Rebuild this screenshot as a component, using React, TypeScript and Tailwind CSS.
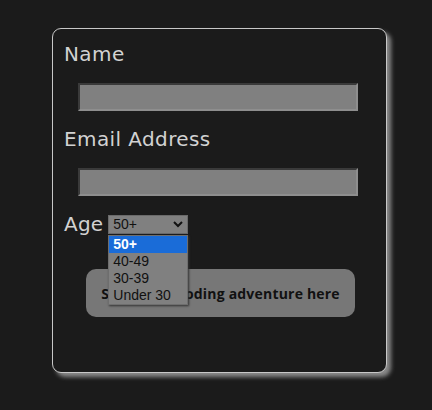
const ages = ["50+", "40-49", "30-39", "Under 30"];

export default function App() {
  return (
    <div className="w-[432px] h-[410px] bg-[#1b1b1b] pt-[28px] pl-[52px] font-['DejaVu_Sans',sans-serif]">
      <form className="w-[335px] h-[345px] border border-[#c8c8c8] rounded-[9px] bg-[#1b1b1b] shadow-[4px_4px_4px_#8a8a8a] px-[11px] pt-[10px] flex flex-col">
        <label className="text-[20px] tracking-[0.4px] leading-[30px] text-[#d2d2d2]">Name</label>
        <input
          type="text"
          className="mt-[14px] ml-[14px] w-[280px] h-[28px] bg-[#808080] border-2 border-t-[#3a3a3a] border-l-[#3a3a3a] border-b-[#8e8e8e] border-r-[#8e8e8e] outline-none"
        />
        <label className="mt-[13px] text-[20px] tracking-[0.4px] leading-[30px] text-[#d2d2d2]">Email Address</label>
        <input
          type="email"
          className="mt-[14px] ml-[14px] w-[280px] h-[28px] bg-[#808080] border-2 border-t-[#3a3a3a] border-l-[#3a3a3a] border-b-[#8e8e8e] border-r-[#8e8e8e] outline-none"
        />
        <div className="mt-[15px] flex items-center gap-[5px] relative">
          <label className="text-[20px] tracking-[0.2px] leading-[26px] text-[#d2d2d2]">Age</label>
          <div className="relative">
            <div className="w-[80px] h-[19px] bg-[#808080] border border-[#6a6a6a] flex items-center justify-between px-[4px] font-['Liberation_Sans',sans-serif] text-[14px] text-[#111]">
              <span>50+</span>
              <svg width="10" height="7" viewBox="0 0 10 7">
                <path d="M1 1 L5 5 L9 1" fill="none" stroke="#111" strokeWidth="2" />
              </svg>
            </div>
            <ul className="absolute z-10 left-0 top-[20px] w-[80px] bg-[#808080] border border-[#6e6e6e] shadow-[1px_1px_2px_#333] font-['Liberation_Sans',sans-serif] text-[14px] leading-[17px] text-[#111]">
              {ages.map((a, i) => (
                <li
                  key={a}
                  className={i === 0 ? "bg-[#1a6cd8] text-white font-bold px-[4px]" : "px-[4px]"}
                >
                  {a}
                </li>
              ))}
            </ul>
          </div>
        </div>
        <button
          type="button"
          className="mt-[32px] ml-[22px] w-[269px] h-[48px] rounded-[10px] bg-[#777777] text-[#111] font-bold text-[14px] tracking-[0.2px] font-['Open_Sans',sans-serif]"
        >
          Start your coding adventure here
        </button>
      </form>
    </div>
  );
}
